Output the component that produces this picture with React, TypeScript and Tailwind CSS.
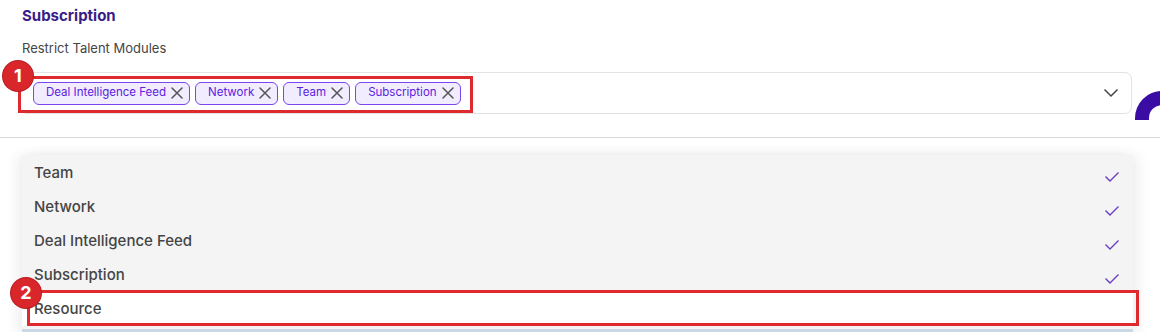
import React from 'react';

const chips = ['Deal Intelligence Feed', 'Network', 'Team', 'Subscription'];
const options = [
  { label: 'Team', checked: true },
  { label: 'Network', checked: true },
  { label: 'Deal Intelligence Feed', checked: true },
  { label: 'Subscription', checked: true },
  { label: 'Resource', checked: false },
];

const CloseIcon = () => (
  <svg width="14" height="14" viewBox="0 0 14 14" className="shrink-0">
    <path d="M2 2 L12 12 M12 2 L2 12" stroke="#555" strokeWidth="1.5" strokeLinecap="round" />
  </svg>
);

const Check = () => (
  <svg width="16" height="12" viewBox="0 0 16 12" className="mt-[7px]">
    <path d="M1.5 5.5 L6 10 L14.5 1.5" fill="none" stroke="#6a3cc4" strokeWidth="1.4" />
  </svg>
);

const Badge = ({ n, className }: { n: number; className: string }) => (
  <div
    className={`absolute w-[30px] h-[30px] rounded-full bg-[#d9262b] text-white text-[18px] font-bold flex items-center justify-center leading-none shadow-[0_0_0_1px_#b81d22] ${className}`}
  >
    {n}
  </div>
);

export default function App() {
  return (
    <div className="relative w-[1160px] h-[332px] overflow-hidden bg-white font-['Inter',sans-serif]">
      {/* Field */}
      <div className="pl-[22px] pt-[5px]">
        <h2 className="text-[15px] leading-[22px] font-bold text-[#3a1d86]">Subscription</h2>
        <p className="mt-[12px] text-[13px] leading-[18px] text-[#454545]">Restrict Talent Modules</p>
        <div className="mt-[15px] -ml-[2px] w-[1112px] h-[42px] border border-[#e3e3e3] rounded-[7px] flex items-center pl-[12px] pr-[12px] gap-[5px]">
          {chips.map((c) => (
            <span
              key={c}
              className="h-[23px] flex items-center gap-[4px] pl-[12px] pr-[5px] rounded-[6px] border border-[#7b45f0] bg-[#f2ecff] text-[11.5px] text-[#5a22e0]"
            >
              {c}
              <CloseIcon />
            </span>
          ))}
          <svg width="16" height="10" viewBox="0 0 16 10" className="ml-auto">
            <path d="M1.5 1.5 L8 8 L14.5 1.5" fill="none" stroke="#444" strokeWidth="1.5" />
          </svg>
        </div>
      </div>

      <div className="mt-[23px] border-t border-[#d9d9d9]" />

      {/* Dropdown */}
      <div className="ml-[22px] mt-[17px] pt-[1px] w-[1111px] bg-[#f4f4f4] shadow-[-6px_0_12px_rgba(0,0,0,0.06),6px_0_12px_rgba(0,0,0,0.06)]">
        {options.map((o) => (
          <div
            key={o.label}
            className={`h-[34px] flex items-center justify-between pl-[12px] pr-[13px] text-[15px] font-medium text-[#444] ${o.checked ? '' : 'bg-white'}`}
          >
            <span className="mt-[1px]">{o.label}</span>
            {o.checked && <Check />}
          </div>
        ))}
        <div className="h-[3px]" />
        <div className="h-[6px] bg-[#cbd8e6]" />
      </div>

      {/* Help button peeking in */}
      <svg width="26" height="30" viewBox="0 0 26 30" className="absolute left-[1134px] top-[90px]">
        <path d="M28 1 A27 27 0 0 0 1 28 L1 30 L15 30 L15 28 A13 13 0 0 1 28 15 Z" fill="#3a0ca3" />
      </svg>

      {/* Annotations */}
      <div className="absolute left-[18px] top-[76px] w-[455px] h-[37px] border-[3px] border-[#df2a2d]" />
      <Badge n={1} className="left-[3px] top-[61px]" />
      <div className="absolute left-[27px] top-[290px] w-[1112px] h-[36px] border-[3px] border-[#df2a2d]" />
      <Badge n={2} className="left-[11px] top-[278px]" />
    </div>
  );
}
